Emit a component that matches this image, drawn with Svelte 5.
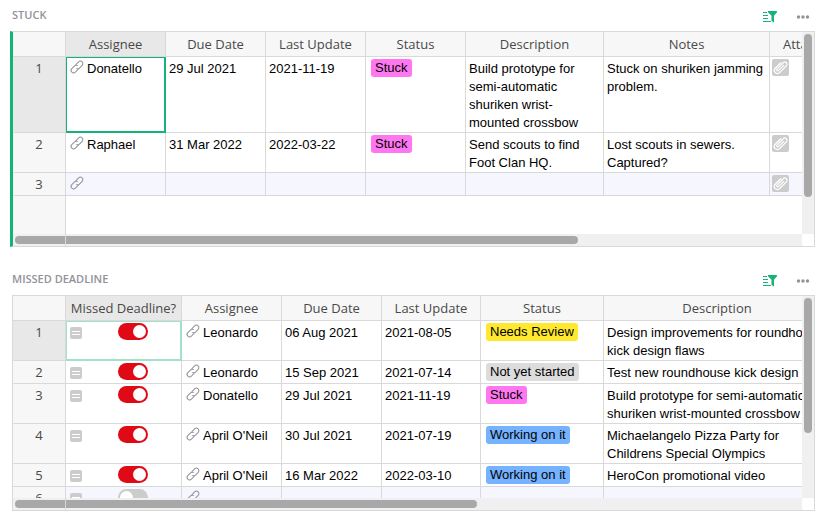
<script lang="ts">
  type Column = { key: string; label: string; width: number; type: string };

  const tokenClasses: Record<string, string> = {
    'Stuck': 'stuck',
    'Needs Review': 'review',
    'Not yet started': 'waiting',
    'Working on it': 'working'
  };

  const stuckColumns: Column[] = [
    { key: 'assignee', label: 'Assignee', width: 100, type: 'ref' },
    { key: 'due', label: 'Due Date', width: 100, type: 'text' },
    { key: 'updated', label: 'Last Update', width: 100, type: 'text' },
    { key: 'status', label: 'Status', width: 100, type: 'choice' },
    { key: 'description', label: 'Description', width: 138, type: 'text' },
    { key: 'notes', label: 'Notes', width: 166, type: 'text' },
    { key: 'files', label: 'Attachments', width: 104, type: 'files' }
  ];

  const missedColumns: Column[] = [
    { key: 'missed', label: 'Missed Deadline?', width: 116, type: 'toggle' },
    { key: 'assignee', label: 'Assignee', width: 100, type: 'ref' },
    { key: 'due', label: 'Due Date', width: 100, type: 'text' },
    { key: 'updated', label: 'Last Update', width: 99, type: 'text' },
    { key: 'status', label: 'Status', width: 123, type: 'choice' },
    { key: 'description', label: 'Description', width: 227, type: 'text' }
  ];

  // thumbX and thumbY are the scrollbar thumb sizes in percent
  let sections: any[] = [
    {
      title: 'Stuck',
      active: true,
      thumbX: 71.7,
      thumbY: 82.3,
      columns: stuckColumns,
      rows: [
        {
          assignee: 'Donatello',
          due: '29 Jul 2021',
          updated: '2021-11-19',
          status: 'Stuck',
          description: 'Build prototype for semi-automatic shuriken wrist-mounted crossbow',
          notes: 'Stuck on shuriken jamming problem.'
        },
        {
          assignee: 'Raphael',
          due: '31 Mar 2022',
          updated: '2022-03-22',
          status: 'Stuck',
          description: 'Send scouts to find Foot Clan HQ.',
          notes: 'Lost scouts in sewers. Captured?'
        },
        { isNew: true }
      ]
    },
    {
      title: 'Missed Deadline',
      active: false,
      thumbX: 58.9,
      thumbY: 68.2,
      columns: missedColumns,
      rows: [
        {
          missed: true,
          assignee: 'Leonardo',
          due: '06 Aug 2021',
          updated: '2021-08-05',
          status: 'Needs Review',
          description: 'Design improvements for roundhouse kick design flaws'
        },
        {
          missed: true,
          assignee: 'Leonardo',
          due: '15 Sep 2021',
          updated: '2021-07-14',
          status: 'Not yet started',
          description: 'Test new roundhouse kick design'
        },
        {
          missed: true,
          assignee: 'Donatello',
          due: '29 Jul 2021',
          updated: '2021-11-19',
          status: 'Stuck',
          description: 'Build prototype for semi-automatic shuriken wrist-mounted crossbow'
        },
        {
          missed: true,
          assignee: "April O'Neil",
          due: '30 Jul 2021',
          updated: '2021-07-19',
          status: 'Working on it',
          description: 'Michaelangelo Pizza Party for Childrens Special Olympics'
        },
        {
          missed: true,
          assignee: "April O'Neil",
          due: '16 Mar 2022',
          updated: '2022-03-10',
          status: 'Working on it',
          description: 'HeroCon promotional video'
        },
        { isNew: true, missed: false }
      ]
    }
  ];
</script>

<main class="page">
  {#each sections as section}
    <section class="widget" class:active={section.active}>
      <header class="titlebar">
        <h2>{section.title}</h2>
        <button type="button" class="icon-button filter" aria-label="Sort and filter">
          <svg viewBox="0 0 16 16" width="16" height="16">
            <path d="M1 3.5h4M1 6.5h5M1 9.5h5M1 12.5h8" stroke="currentColor" stroke-width="1" />
            <path d="M6 2h9v1.2L12 6.8V13.5L9.5 12V6.8L6 3.2z" fill="currentColor" />
          </svg>
        </button>
        <button type="button" class="icon-button" aria-label="Widget menu">
          <svg viewBox="0 0 16 16" width="16" height="16" fill="currentColor">
            <circle cx="3.5" cy="8" r="1.7" />
            <circle cx="8" cy="8" r="1.7" />
            <circle cx="12.5" cy="8" r="1.7" />
          </svg>
        </button>
      </header>

      <div class="frame">
        <div class="pane">
          <table>
            <colgroup>
              <col class="number-col" />
              {#each section.columns as column}
                <col style="width: {column.width}px" />
              {/each}
            </colgroup>
            <thead>
              <tr>
                <td class="corner"></td>
                {#each section.columns as column, c}
                  <th scope="col" class:current={c === 0}>{column.label}</th>
                {/each}
              </tr>
            </thead>
            <tbody>
              {#each section.rows as row, r}
                <tr class:add-row={row.isNew}>
                  <th scope="row" class:current={r === 0}>{r + 1}</th>
                  {#each section.columns as column, c}
                    <td class={column.type} class:cursor={r === 0 && c === 0}>
                      {#if column.type === 'ref'}
                        <div class="ref-value">
                          <svg viewBox="0 0 16 16" width="16" height="16" fill="none" stroke="currentColor" stroke-linecap="round">
                            <g transform="rotate(45 8 8)">
                              <path d="M5.5 7V3.2a2.5 2.5 0 0 1 5 0v3.8a2.5 2.5 0 0 1-1.6 2.3" />
                              <path d="M10.5 9v3.8a2.5 2.5 0 0 1-5 0V9a2.5 2.5 0 0 1 1.6-2.3" />
                            </g>
                          </svg>
                          <span>{row.assignee ?? ''}</span>
                        </div>
                      {:else if column.type === 'choice'}
                        {#if row.status}
                          <span class="token {tokenClasses[row.status]}">{row.status}</span>
                        {/if}
                      {:else if column.type === 'toggle'}
                        <div class="toggle-value">
                          <svg viewBox="0 0 12 12" width="12" height="12">
                            <rect width="12" height="12" rx="2" fill="#ccc" />
                            <path d="M2 4.5h8M2 7.5h8" stroke="#fff" />
                          </svg>
                          <input type="checkbox" aria-label="Missed deadline, row {r + 1}" bind:checked={row.missed} />
                        </div>
                      {:else if column.type === 'files'}
                        <button type="button" class="attach" aria-label="Add attachment">
                          <svg viewBox="0 0 17 17" width="17" height="17" fill="none" stroke="#fff" stroke-width="1.2" stroke-linecap="round">
                            <path
                              transform="rotate(45 8.5 8.5)"
                              d="M5.3 5v7.8a3.1 3.1 0 0 0 6.2 0V3.2a2.2 2.2 0 0 0-4.4 0v8.9a1.1 1.1 0 0 0 2.2 0V4.6"
                            />
                          </svg>
                        </button>
                      {:else}
                        {row[column.key] ?? ''}
                      {/if}
                    </td>
                  {/each}
                </tr>
              {/each}
            </tbody>
          </table>
        </div>
        <div class="track vertical">
          <div class="thumb" style="height: {section.thumbY}%"></div>
        </div>
        <div class="track horizontal">
          <div class="thumb" style="width: {section.thumbX}%"></div>
        </div>
      </div>
    </section>
  {/each}
</main>

<style>
  :global(body) {
    margin: 0;
    background: #fff;
  }

  .page {
    display: flex;
    flex-direction: column;
    gap: 17px;
    box-sizing: border-box;
    height: 100vh;
    padding: 0 13px 12px 10px;
    font-family: 'Liberation Sans', Arial, sans-serif;
    font-size: 13px;
    line-height: 18px;
    color: #000;
  }

  .widget {
    display: flex;
    flex: 1;
    flex-direction: column;
    min-height: 0;
  }

  .titlebar {
    display: flex;
    align-items: center;
    gap: 17px;
    height: 31px;
    padding: 0 4px 0 2px;
  }

  h2 {
    flex: 1;
    margin: 0;
    padding-bottom: 2px;
    font-family: 'Open Sans', 'Noto Sans', sans-serif;
    font-size: 11px;
    font-weight: 600;
    text-transform: uppercase;
    color: #929299;
  }

  .icon-button {
    padding: 2px 0 0;
    border: 0;
    background: none;
    color: #929299;
  }

  .icon-button.filter {
    color: #16b378;
  }

  svg {
    display: block;
    flex: none;
  }

  .frame {
    position: relative;
    display: grid;
    flex: 1;
    grid-template: minmax(0, 1fr) 12px / minmax(0, 1fr) 12px;
    min-height: 0;
    margin-left: 2px;
    border: 1px solid #d9d9d9;
  }

  .active .frame {
    margin-left: 0;
    border-left: 3px solid #16b378;
  }

  /* the row number gutter runs down past the last row */
  .frame::before {
    content: '';
    position: absolute;
    top: 0;
    bottom: 0;
    left: 0;
    width: 52px;
    background: #f7f7f7;
  }

  .frame::after {
    content: '';
    position: absolute;
    top: 0;
    bottom: 0;
    left: 52px;
    width: 1px;
    background: #d9d9d9;
  }

  .pane {
    position: relative;
    overflow: auto;
    scrollbar-width: none;
  }

  .track {
    position: relative;
    padding: 2px;
    background: #f0f0f0;
  }

  .vertical .thumb {
    width: 8px;
  }

  .horizontal .thumb {
    height: 8px;
  }

  .thumb {
    border-radius: 4px;
    background: #a8a8a8;
  }

  table {
    width: 1px;
    table-layout: fixed;
    border-collapse: separate;
    border-spacing: 0;
  }

  .number-col {
    width: 53px;
  }

  th,
  td {
    box-sizing: border-box;
    height: 23px;
    padding: 2px 3px 1px;
    border-right: 1px solid #d9d9d9;
    border-bottom: 1px solid #d9d9d9;
    text-align: left;
    vertical-align: top;
  }

  th,
  .corner {
    background: #f7f7f7;
    font-family: 'Open Sans', 'Noto Sans', sans-serif;
    font-weight: 400;
    color: #494949;
    text-align: center;
  }

  thead th,
  .corner {
    height: 25px;
    padding: 3px 0;
    white-space: nowrap;
  }

  th.current {
    background: #e8e8e8;
  }

  .add-row td {
    background: #f6f6ff;
  }

  .cursor {
    border-color: #a2e1c9;
    box-shadow: inset 1px 1px #a2e1c9, inset -1px -1px #a2e1c9;
  }

  .active .cursor {
    border-color: #16b378;
    box-shadow: inset 1px 1px #16b378, inset -1px -1px #16b378;
  }

  .text {
    padding: 3px 3px 0;
  }

  .ref-value {
    display: flex;
    gap: 2px;
  }

  .ref-value svg {
    color: #929299;
  }

  .ref-value span {
    padding-top: 1px;
  }

  .choice {
    padding: 2px 5px 0;
  }

  .token {
    display: block;
    width: fit-content;
    padding: 1px 4px;
    border-radius: 3px;
    line-height: 16px;
    white-space: nowrap;
  }

  .stuck {
    background: #ff77f0;
  }

  .review {
    background: #ffe92f;
  }

  .waiting {
    background: #dcdcdc;
  }

  .working {
    background: #75b2ff;
  }

  .toggle-value {
    display: flex;
    align-items: flex-start;
  }

  .toggle-value svg {
    margin: 4px 6px 0 1px;
  }

  input {
    position: relative;
    width: 30px;
    height: 17px;
    margin: 0 auto;
    border-radius: 9px;
    background: #ccc;
    appearance: none;
  }

  input::before {
    content: '';
    position: absolute;
    top: 2px;
    left: 2px;
    width: 13px;
    height: 13px;
    border-radius: 50%;
    background: #fff;
  }

  input:checked {
    background: #e00a17;
  }

  input:checked::before {
    left: 15px;
  }

  .files {
    padding: 2px;
  }

  .attach {
    display: block;
    padding: 0;
    border: 0;
    border-radius: 2px;
    background: #ccc;
  }
</style>
